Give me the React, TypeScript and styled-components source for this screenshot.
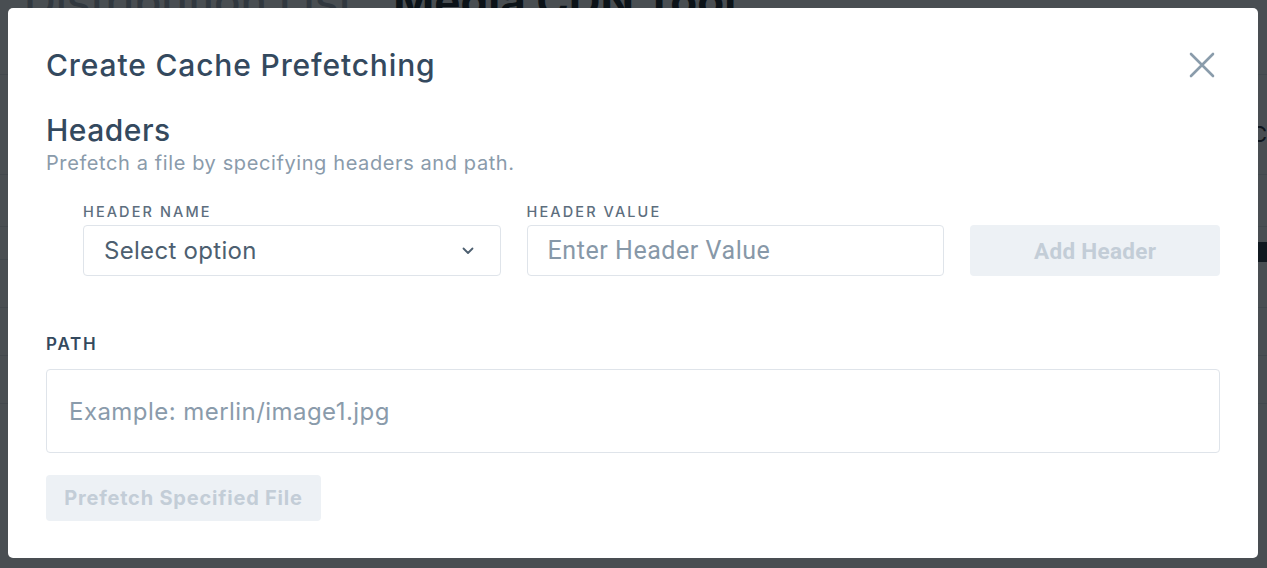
import React from "react";
import styled, { createGlobalStyle } from "styled-components";

const Global = createGlobalStyle`
  html, body { margin: 0; padding: 0; background: #ffffff; }
  body { font-family: "Inter", "Noto Sans", sans-serif; overflow: hidden; }
  * { box-sizing: border-box; }
`;

const Page = styled.div`
  width: 1267px;
  height: 568px;
  position: relative;
  overflow: hidden;
  background: #ffffff;
`;

const PageHeader = styled.div`
  display: flex;
  align-items: baseline;
  gap: 40px;
  padding: 0 0 0 24px;
  margin-top: -26px;
  height: 42px;
`;

const PageTab = styled.div<{ $active?: boolean }>`
  font-size: 44px;
  font-weight: ${(p) => (p.$active ? 700 : 500)};
  color: ${(p) => (p.$active ? "#151b22" : "#a2abb4")};
`;

const Table = styled.div`
  display: flex;
  flex-direction: column;
`;

const TableRow = styled.div<{ $h: number }>`
  height: ${(p) => p.$h}px;
  border-bottom: 1px solid #e2e6ea;
  display: flex;
  align-items: center;
  justify-content: flex-end;
  padding-top: 18px;
  font-size: 22px;
  color: #1e2a36;
`;

const Overlay = styled.div`
  position: absolute;
  inset: 0;
  background: rgba(10, 16, 22, 0.74);
`;

const Modal = styled.div`
  position: absolute;
  top: 8px;
  left: 8px;
  width: 1250px;
  height: 550px;
  background: #ffffff;
  border-radius: 5px;
  padding: 38px 38px 0 38px;
  display: flex;
  flex-direction: column;
`;

const TitleBar = styled.div`
  display: flex;
  align-items: center;
  justify-content: space-between;
  height: 38px;
`;

const Title = styled.h2`
  margin: 0;
  font-size: 30px;
  font-weight: 500;
  color: #34495e;
  letter-spacing: 0.85px;
  line-height: 38px;
`;

const CloseButton = styled.button`
  border: 0;
  background: transparent;
  padding: 0;
  width: 26px;
  height: 26px;
  margin-right: 5px;
  display: flex;
  align-items: center;
  justify-content: center;
  cursor: pointer;
`;

const SectionTitle = styled.h3`
  margin: 28px 0 0 0;
  font-size: 30px;
  font-weight: 500;
  color: #34495e;
  letter-spacing: 0.5px;
  line-height: 36px;
`;

const SectionSub = styled.p`
  margin: 2px 0 0 0;
  font-size: 20px;
  color: #8a9bab;
  letter-spacing: 0.6px;
  line-height: 26px;
`;

const HeaderRow = styled.div`
  display: flex;
  align-items: flex-end;
  gap: 26px;
  margin: 28px 0 0 37px;
`;

const Field = styled.div`
  display: flex;
  flex-direction: column;
  gap: 5px;
  width: 418px;
`;

const SmallLabel = styled.label`
  font-size: 14.5px;
  font-weight: 500;
  letter-spacing: 2.1px;
  color: #5d6e7e;
  text-transform: uppercase;
  line-height: 16px;
`;

const SelectBox = styled.div`
  height: 51px;
  border: 1px solid #dfe4ea;
  border-radius: 4px;
  display: flex;
  align-items: center;
  justify-content: space-between;
  padding: 0 26px 0 20px;
  font-size: 24px;
  letter-spacing: 0.3px;
  color: #4d5f70;
`;

const TextInput = styled.input<{ $h: number; $pad: number; $fs: number }>`
  height: ${(p) => p.$h}px;
  width: 100%;
  border: 1px solid #dfe4ea;
  border-radius: 4px;
  padding: 0 ${(p) => p.$pad}px;
  font-family: "Inter", "Noto Sans", sans-serif;
  font-size: ${(p) => p.$fs}px;
  letter-spacing: 0.45px;
  color: #34495e;
  outline: none;
  &::placeholder { color: #8a9bab; }
`;

const CondensedInput = styled(TextInput)`
  font-family: "Roboto", sans-serif;
  letter-spacing: 0.55px;
  &::placeholder { color: #8798a8; }
`;

const DisabledButton = styled.button<{ $w: number; $h: number }>`
  width: ${(p) => p.$w}px;
  height: ${(p) => p.$h}px;
  border: 0;
  border-radius: 4px;
  background: #edf1f5;
  color: #c3cdd7;
  font-family: "Inter", "Noto Sans", sans-serif;
  font-size: 20px;
  font-weight: 700;
  letter-spacing: 0.8px;
  padding: 0;
  cursor: not-allowed;
`;

const AddButton = styled(DisabledButton)`
  font-family: "Roboto", sans-serif;
  font-size: 22.5px;
  letter-spacing: 0.3px;
`;

const PathLabel = styled.label`
  margin-top: 58px;
  font-size: 17px;
  font-weight: 600;
  letter-spacing: 1.8px;
  color: #34495e;
  line-height: 20px;
`;

const PathInputWrap = styled.div`
  margin-top: 15px;
`;

const ActionRow = styled.div`
  margin-top: 22px;
  display: flex;
`;

const Icon = styled.svg`
  display: block;
`;

const Block = styled.span`
  display: inline-block;
  width: 10px;
  height: 20px;
  background: #2a3440;
`;

export default function App() {
  return (
    <>
      <Global />
      <Page>
        <PageHeader>
          <PageTab>Distribution List</PageTab>
          <PageTab $active>Media CDN Tool</PageTab>
        </PageHeader>
        <Table>
          <TableRow $h={59} />
          <TableRow $h={100}>C</TableRow>
          <TableRow $h={52} />
          <TableRow $h={33}><Block /></TableRow>
          <TableRow $h={48} />
          <TableRow $h={48} />
          <TableRow $h={48} />
        </Table>
        <Overlay />
        <Modal>
          <TitleBar>
            <Title>Create Cache Prefetching</Title>
            <CloseButton aria-label="Close">
              <Icon width="26" height="26" viewBox="0 0 26 26">
                <path d="M2 2 L24 24 M24 2 L2 24" stroke="#8a9cab" strokeWidth="2.6" strokeLinecap="round" />
              </Icon>
            </CloseButton>
          </TitleBar>
          <SectionTitle>Headers</SectionTitle>
          <SectionSub>Prefetch a file by specifying headers and path.</SectionSub>
          <HeaderRow>
            <Field>
              <SmallLabel>Header Name</SmallLabel>
              <SelectBox>
                <span>Select option</span>
                <Icon width="12" height="8" viewBox="0 0 12 8">
                  <path d="M1.5 1.5 L6 6 L10.5 1.5" stroke="#4d5f70" strokeWidth="1.8" fill="none" strokeLinecap="round" strokeLinejoin="round" />
                </Icon>
              </SelectBox>
            </Field>
            <Field>
              <SmallLabel>Header Value</SmallLabel>
              <CondensedInput $h={51} $pad={20} $fs={25} placeholder="Enter Header Value" />
            </Field>
            <AddButton $w={250} $h={51} disabled>Add Header</AddButton>
          </HeaderRow>
          <PathLabel>PATH</PathLabel>
          <PathInputWrap>
            <TextInput $h={84} $pad={22} $fs={24} placeholder="Example: merlin/image1.jpg" />
          </PathInputWrap>
          <ActionRow>
            <DisabledButton $w={275} $h={46} disabled>Prefetch Specified File</DisabledButton>
          </ActionRow>
        </Modal>
      </Page>
    </>
  );
}
